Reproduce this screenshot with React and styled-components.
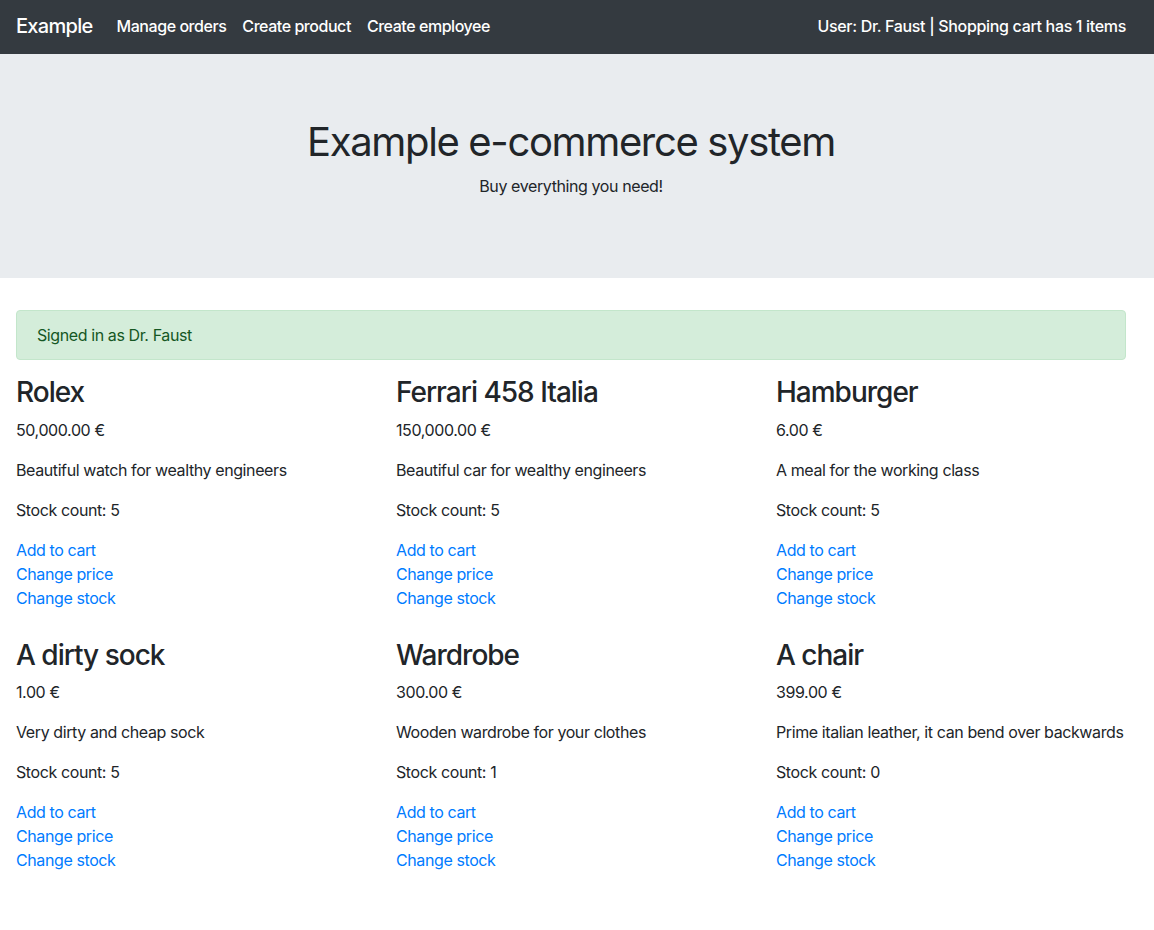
import React from "react";
import styled, { createGlobalStyle } from "styled-components";

const Global = createGlobalStyle`
  html, body { margin: 0; padding: 0; background: #fff; }
  body {
    font-family: Inter, "Noto Sans", "Liberation Sans", sans-serif;
    font-size: 16px;
    line-height: 1.5;
    color: #212529;
    letter-spacing: -0.4px;
  }
  * { box-sizing: border-box; }
`;

const Navbar = styled.nav`
  display: flex;
  align-items: center;
  height: 54px;
  padding: 0 28px 2px 16px;
  background: #343a40;
  color: #fff;
`;

const Brand = styled.a`
  font-size: 20px;
  line-height: 30px;
  font-weight: 500;
  color: #fff;
  text-decoration: none;
  margin-right: 16px;
  letter-spacing: -0.7px;
`;

const NavList = styled.div`
  display: flex;
  flex: 1;
`;

const NavLink = styled.a`
  padding: 8px;
  color: #fff;
  font-weight: 500;
  text-decoration: none;
  letter-spacing: -0.45px;
`;

const NavText = styled.span`
  color: #fff;
  font-weight: 500;
  letter-spacing: -0.33px;
`;

const Jumbotron = styled.header`
  background: #e9ecef;
  padding: 64px 44px 64px 32px;
  margin-bottom: 32px;
  text-align: center;
`;

const Title = styled.h1`
  margin: 0 0 8px;
  font-size: 40px;
  line-height: 48px;
  font-weight: 400;
  letter-spacing: -1.35px;
`;

const Lead = styled.p`
  margin: 0 0 16px;
`;

const Main = styled.main`
  padding: 0 28px 0 16px;
`;

const Alert = styled.div`
  padding: 12px 20px;
  margin-bottom: 16px;
  border: 1px solid #c3e6cb;
  border-radius: 4px;
  background: #d4edda;
  color: #155724;
`;

const Grid = styled.div`
  display: grid;
  grid-template-columns: repeat(3, minmax(0, 1fr));
  column-gap: 30px;
`;

const Product = styled.section`
  margin-bottom: 29px;
`;

const Name = styled.h3`
  margin: 0 0 8px;
  font-size: 28px;
  line-height: 33.6px;
  font-weight: 500;
  letter-spacing: -1px;
`;

const Text = styled.p`
  margin: 0 0 16px;
  white-space: nowrap;
`;

const Link = styled.a`
  display: block;
  color: #007bff;
  text-decoration: none;
`;

const products = [
  { name: "Rolex", price: "50,000.00 €", desc: "Beautiful watch for wealthy engineers", stock: 5 },
  { name: "Ferrari 458 Italia", price: "150,000.00 €", desc: "Beautiful car for wealthy engineers", stock: 5 },
  { name: "Hamburger", price: "6.00 €", desc: "A meal for the working class", stock: 5 },
  { name: "A dirty sock", price: "1.00 €", desc: "Very dirty and cheap sock", stock: 5 },
  { name: "Wardrobe", price: "300.00 €", desc: "Wooden wardrobe for your clothes", stock: 1 },
  { name: "A chair", price: "399.00 €", desc: "Prime italian leather, it can bend over backwards", stock: 0 },
];

export default function App() {
  return (
    <>
      <Global />
      <Navbar>
        <Brand href="#">Example</Brand>
        <NavList>
          <NavLink href="#">Manage orders</NavLink>
          <NavLink href="#">Create product</NavLink>
          <NavLink href="#">Create employee</NavLink>
        </NavList>
        <NavText>User: Dr. Faust | Shopping cart has 1 items</NavText>
      </Navbar>
      <Jumbotron>
        <Title>Example e-commerce system</Title>
        <Lead>Buy everything you need!</Lead>
      </Jumbotron>
      <Main>
        <Alert>Signed in as Dr. Faust</Alert>
        <Grid>
          {products.map((p) => (
            <Product key={p.name}>
              <Name>{p.name}</Name>
              <Text>{p.price}</Text>
              <Text>{p.desc}</Text>
              <Text>Stock count: {p.stock}</Text>
              <Link href="#">Add to cart</Link>
              <Link href="#">Change price</Link>
              <Link href="#">Change stock</Link>
            </Product>
          ))}
        </Grid>
      </Main>
    </>
  );
}
